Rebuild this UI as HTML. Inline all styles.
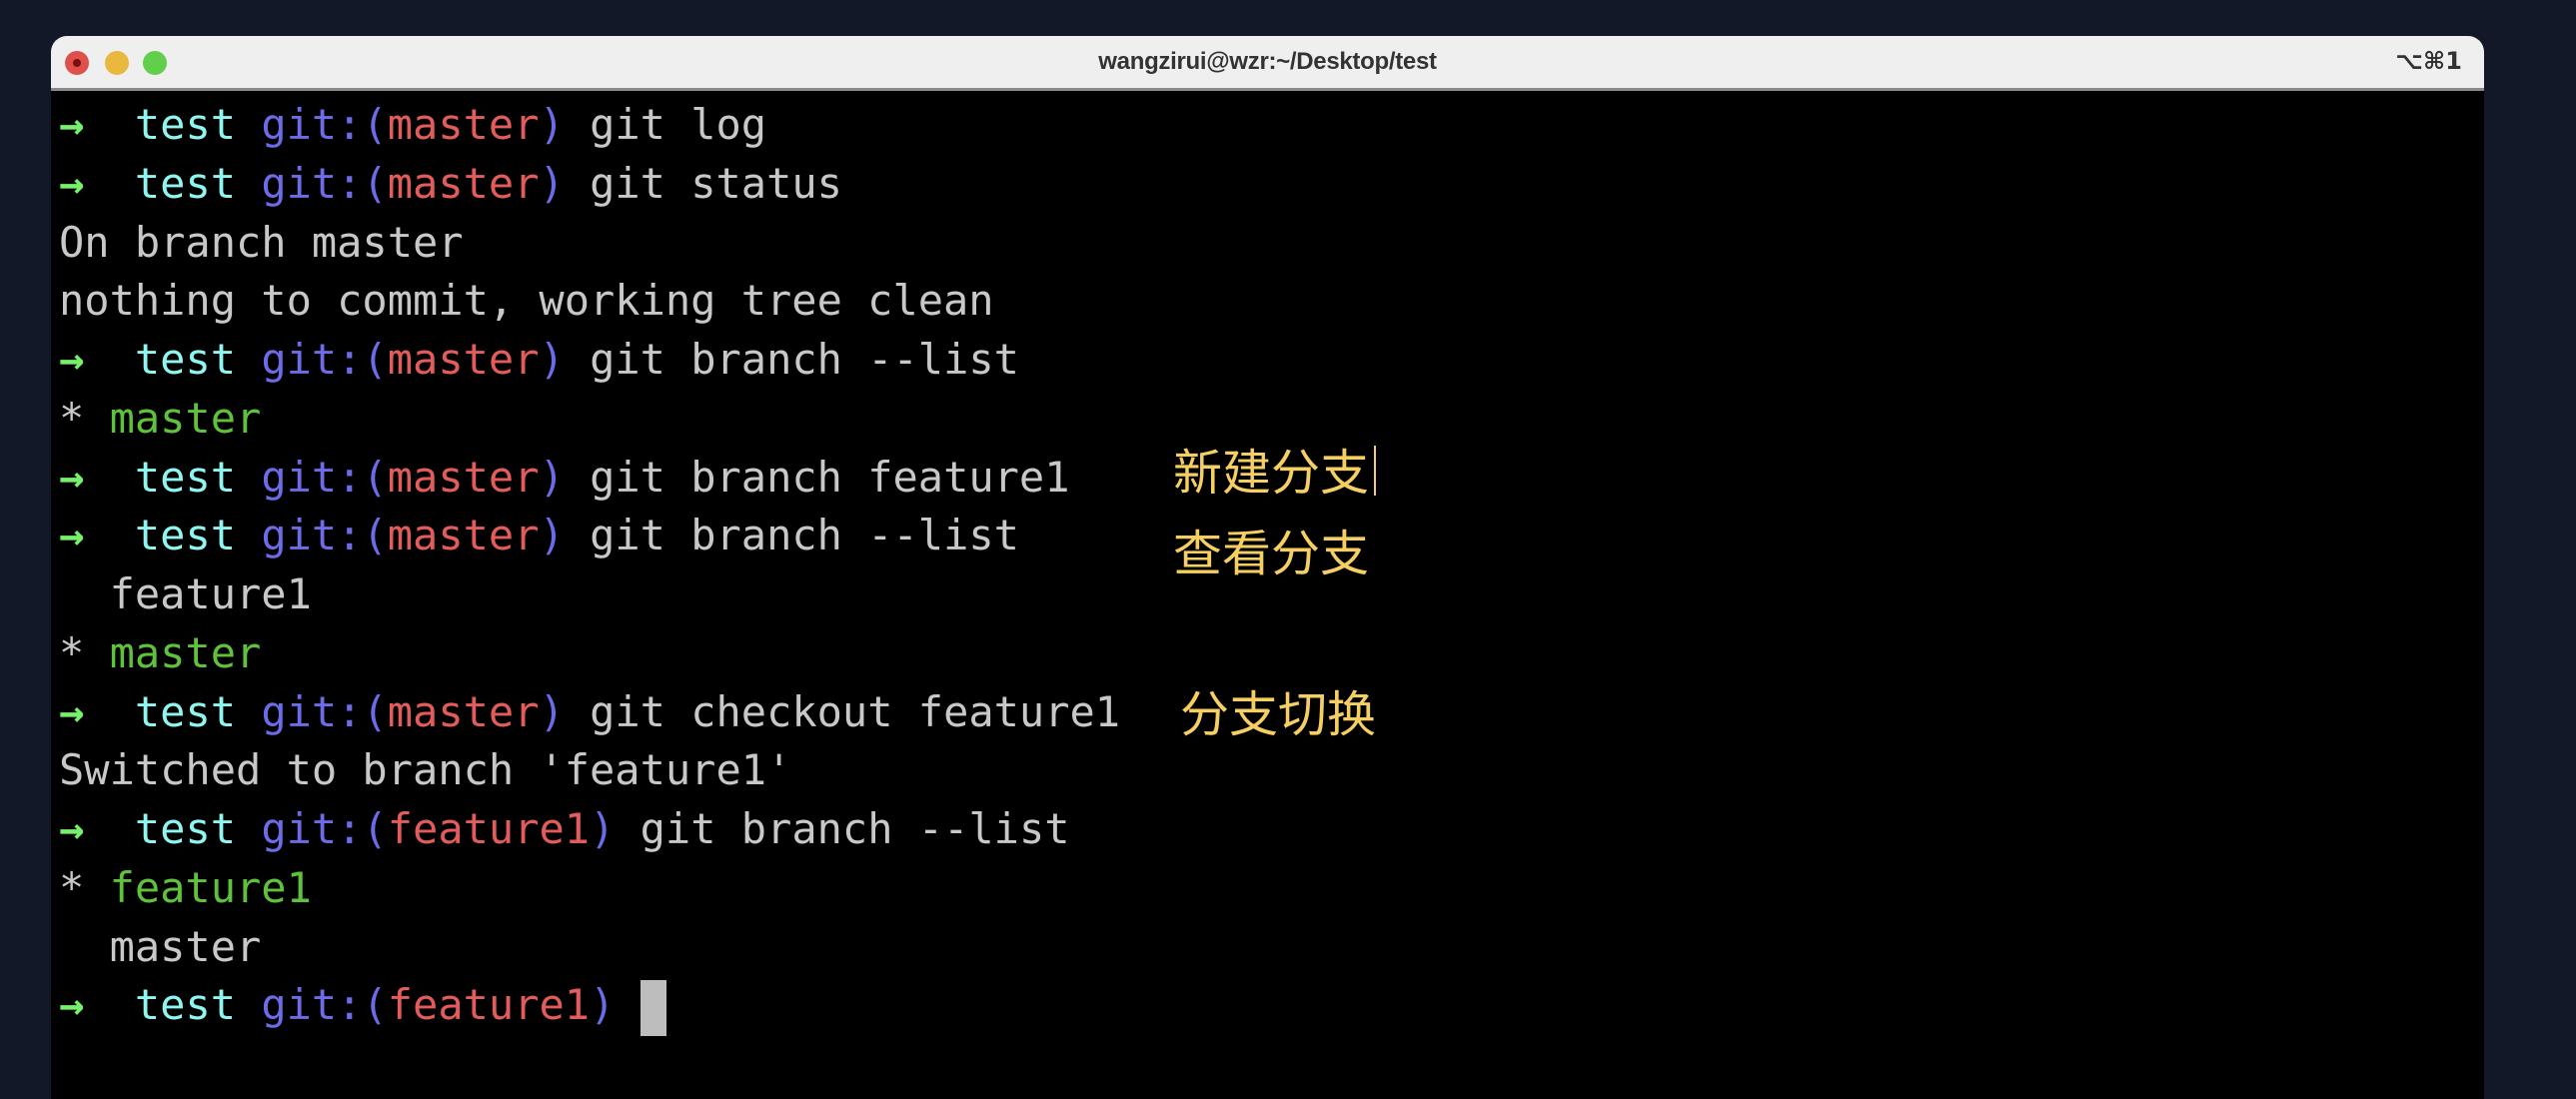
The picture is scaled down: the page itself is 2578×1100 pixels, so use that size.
<!DOCTYPE html>
<html><head><meta charset="utf-8"><style>
html,body{margin:0;padding:0;width:2578px;height:1100px;background:#121828;overflow:hidden}
.win{position:absolute;left:51px;top:36px;width:2435px;height:1064px;background:#000;border-radius:16px 16px 0 0;overflow:hidden}
.tb{position:absolute;left:0;top:0;width:100%;height:55px;background:#efefef;border-bottom:3px solid #8a8a8a;box-sizing:border-box}
.dot{position:absolute;top:15px;width:24px;height:24px;border-radius:50%}
.title{position:absolute;left:0;right:0;top:0;text-align:center;font:bold 24px "Liberation Sans",sans-serif;line-height:52px;color:#333;letter-spacing:-0.3px}
.sc{position:absolute;right:22px;top:0;font:bold 24px "DejaVu Sans",sans-serif;line-height:50px;color:#333}
.term{position:absolute;left:8px;top:60px;font-family:"DejaVu Sans Mono",monospace;font-size:42px;color:#c8c8c8}
.l{height:58.75px;line-height:58.75px;white-space:pre}
.a{color:#76f26a;font-weight:bold}.c{color:#8ff6ef}.b{color:#6d6be8}.r{color:#e25c5c}.g{color:#5ec23c}
.cur{display:inline-block;width:26px;height:56px;background:#bdbdbd;vertical-align:middle}
.zh{position:absolute;font:49px "Noto Sans CJK SC",sans-serif;line-height:60px;color:#f6cf62}
</style></head><body>
<div class="win">
 <div class="tb">
  <div class="dot" style="left:14px;background:#e0504a"><div style="position:absolute;left:8px;top:8px;width:8px;height:8px;border-radius:50%;background:#7a1010"></div></div>
  <div class="dot" style="left:54px;background:#ebb83f"></div>
  <div class="dot" style="left:92px;background:#62cf4c"></div>
  <div class="title">wangzirui@wzr:~/Desktop/test</div>
  <div class="sc">⌥⌘1</div>
 </div>
 <div class="term"><div class="l"><span class="a">→</span>  <span class="c">test</span> <span class="b">git:(</span><span class="r">master</span><span class="b">)</span> git log</div><div class="l"><span class="a">→</span>  <span class="c">test</span> <span class="b">git:(</span><span class="r">master</span><span class="b">)</span> git status</div><div class="l">On branch master</div><div class="l">nothing to commit, working tree clean</div><div class="l"><span class="a">→</span>  <span class="c">test</span> <span class="b">git:(</span><span class="r">master</span><span class="b">)</span> git branch --list</div><div class="l">* <span class="g">master</span></div><div class="l"><span class="a">→</span>  <span class="c">test</span> <span class="b">git:(</span><span class="r">master</span><span class="b">)</span> git branch feature1</div><div class="l"><span class="a">→</span>  <span class="c">test</span> <span class="b">git:(</span><span class="r">master</span><span class="b">)</span> git branch --list</div><div class="l">  feature1</div><div class="l">* <span class="g">master</span></div><div class="l"><span class="a">→</span>  <span class="c">test</span> <span class="b">git:(</span><span class="r">master</span><span class="b">)</span> git checkout feature1</div><div class="l">Switched to branch 'feature1'</div><div class="l"><span class="a">→</span>  <span class="c">test</span> <span class="b">git:(</span><span class="r">feature1</span><span class="b">)</span> git branch --list</div><div class="l">* <span class="g">feature1</span></div><div class="l">  master</div><div class="l"><span class="a">→</span>  <span class="c">test</span> <span class="b">git:(</span><span class="r">feature1</span><span class="b">)</span> <span class="cur"></span></div></div>
</div>
<div class="zh" style="left:1174px;top:440px">新建分支</div>
<div style="position:absolute;left:1375px;top:446px;width:2px;height:50px;background:#f6cf62"></div>
<div class="zh" style="left:1174px;top:521px">查看分支</div>
<div class="zh" style="left:1181px;top:682px">分支切换</div>
</body></html>
